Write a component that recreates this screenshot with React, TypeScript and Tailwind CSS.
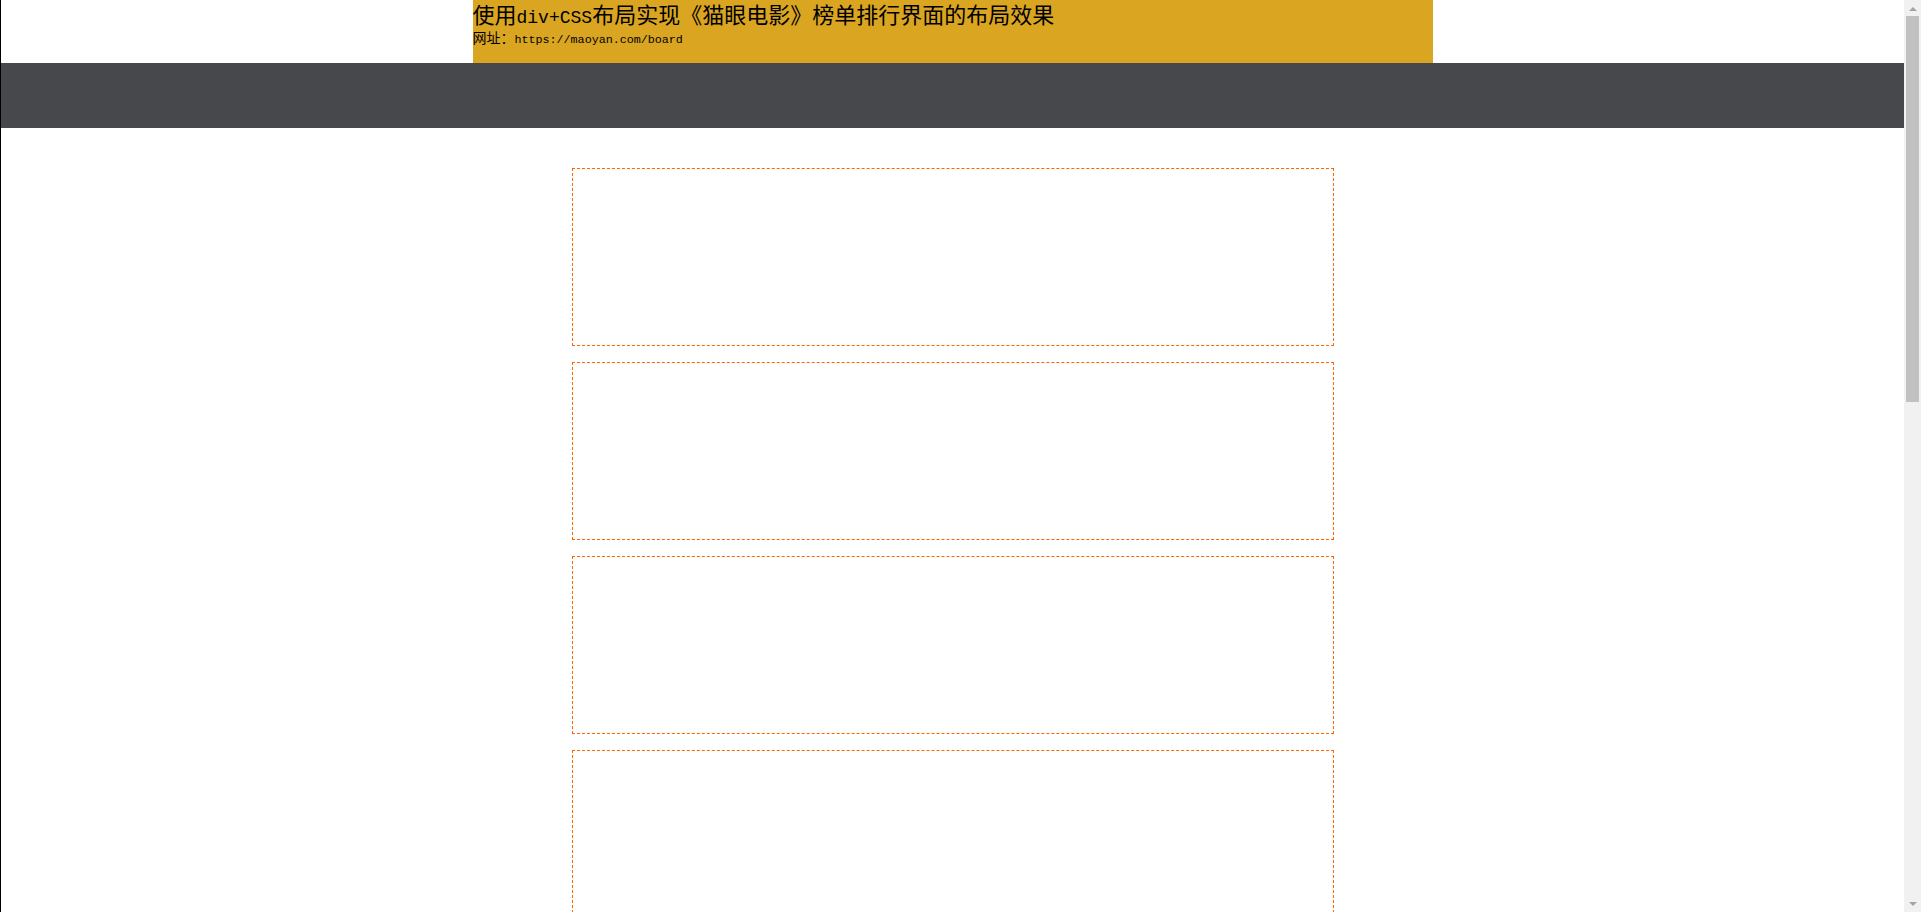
import React from "react";

const cjk = { fontFamily: '"Noto Sans CJK SC", "Noto Sans", sans-serif' };
const mono = { fontFamily: '"Liberation Mono", "DejaVu Sans Mono", monospace' };

const boards = Array.from({ length: 10 }, (_, i) => i + 1);

function Scrollbar() {
  return (
    <div className="w-[17px] shrink-0 h-full bg-[#f1f1f1] flex flex-col items-center">
      <div className="h-[16px] w-full flex items-center justify-center">
        <svg width="8" height="5" viewBox="0 0 8 5">
          <path d="M0 5 L4 1 L8 5 Z" fill="#a3a3a3" />
        </svg>
      </div>
      <div className="w-[13px] h-[386px] bg-[#c1c1c1]"></div>
      <div className="flex-1"></div>
      <div className="h-[16px] w-full flex items-center justify-center">
        <svg width="8" height="5" viewBox="0 0 8 5">
          <path d="M0 0 L4 4 L8 0 Z" fill="#a3a3a3" />
        </svg>
      </div>
    </div>
  );
}

export default function App() {
  return (
    <div className="flex h-screen overflow-hidden bg-white text-black" style={cjk}>
      <div className="flex-1 min-w-0 h-full overflow-hidden border-l border-black">
        {/* title block */}
        <div className="mx-auto w-[960px] h-[63px] bg-[#daa520]">
          <h1 className="text-[22px] leading-[24px] font-normal pt-px">
            使用<span className="text-[18px]" style={mono}>div+CSS</span>
            布局实现《猫眼电影》榜单排行界面的布局效果
          </h1>
          <p className="text-[14px] leading-[15px]">
            网址：<span className="text-[11.7px]" style={mono}>https://maoyan.com/board</span>
          </p>
        </div>

        {/* nav bar */}
        <div className="h-[65px] bg-[#47484c]"></div>

        {/* board list */}
        <div className="flex flex-col items-center gap-4 pt-10 pb-10">
          {boards.map((n) => (
            <div
              key={n}
              className="w-[762px] h-[178px] shrink-0 border border-dashed border-[#ff6600]"
            ></div>
          ))}
        </div>
      </div>
      <Scrollbar />
    </div>
  );
}
